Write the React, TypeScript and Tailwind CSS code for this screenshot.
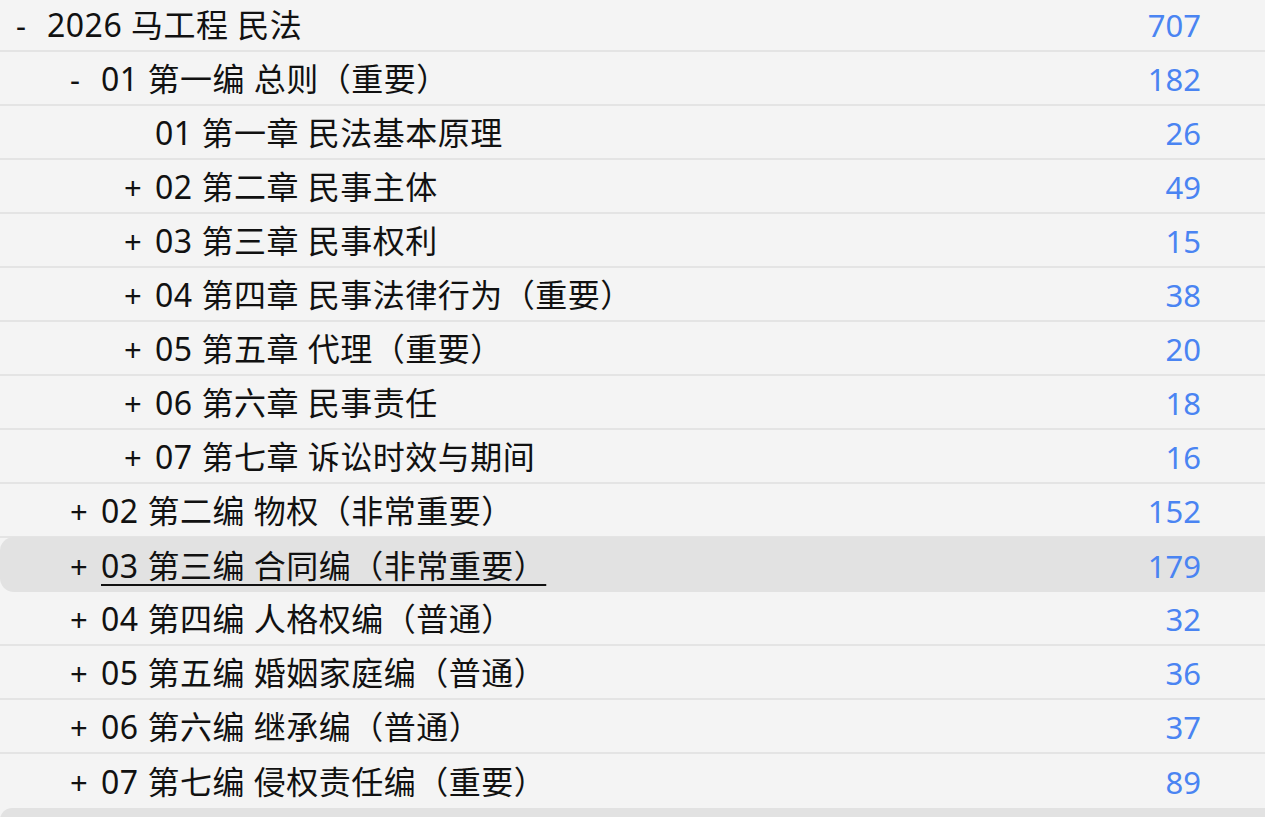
import React from "react";

type Item = {
  level: number;
  mark: "+" | "-" | "";
  title: string;
  count: number;
  active?: boolean;
};

const items: Item[] = [
  { level: 0, mark: "-", title: "2026 马工程 民法", count: 707 },
  { level: 1, mark: "-", title: "01 第一编 总则（重要）", count: 182 },
  { level: 2, mark: "", title: "01 第一章 民法基本原理", count: 26 },
  { level: 2, mark: "+", title: "02 第二章 民事主体", count: 49 },
  { level: 2, mark: "+", title: "03 第三章 民事权利", count: 15 },
  { level: 2, mark: "+", title: "04 第四章 民事法律行为（重要）", count: 38 },
  { level: 2, mark: "+", title: "05 第五章 代理（重要）", count: 20 },
  { level: 2, mark: "+", title: "06 第六章 民事责任", count: 18 },
  { level: 2, mark: "+", title: "07 第七章 诉讼时效与期间", count: 16 },
  { level: 1, mark: "+", title: "02 第二编 物权（非常重要）", count: 152 },
  { level: 1, mark: "+", title: "03 第三编 合同编（非常重要）", count: 179, active: true },
  { level: 1, mark: "+", title: "04 第四编 人格权编（普通）", count: 32 },
  { level: 1, mark: "+", title: "05 第五编 婚姻家庭编（普通）", count: 36 },
  { level: 1, mark: "+", title: "06 第六编 继承编（普通）", count: 37 },
  { level: 1, mark: "+", title: "07 第七编 侵权责任编（重要）", count: 89 },
];

const pad = ["pl-[16px]", "pl-[70px]", "pl-[124px]"];

export default function App() {
  return (
    <div
      className="w-[1265px] h-[817px] overflow-hidden bg-[#f4f4f4] text-[31px] text-[#111]"
      style={{ fontFamily: '"Noto Sans", "Noto Sans CJK SC", sans-serif' }}
    >
      <div className="-mt-[2px]">
        {items.map((it, i) => {
          const last = i === items.length - 1;
          return (
            <div
              key={it.title}
              className={
                it.active
                  ? "relative -mt-[1px] flex h-[55px] items-center rounded-l-[14px] bg-[#e2e2e2] pt-[3px] pr-[64px] " + pad[it.level]
                  : "flex h-[54px] items-center pt-[2px] pr-[64px] " +
                    (last ? "" : "border-b-2 border-[#e4e4e4] ") +
                    pad[it.level]
              }
            >
              <span className="w-[31px] shrink-0 leading-none">{it.mark}</span>
              <span
                className={
                  "flex-1 whitespace-pre text-[32px] leading-none tracking-[0.5px] " +
                  (it.active ? "underline decoration-2 underline-offset-[6px]" : "")
                }
              >
                {it.title}
              </span>
              <span className="leading-none text-[#4a84f2]">{it.count}</span>
            </div>
          );
        })}
        <div className="h-[12px] rounded-tl-[12px] bg-[#e2e2e2]" />
      </div>
    </div>
  );
}
